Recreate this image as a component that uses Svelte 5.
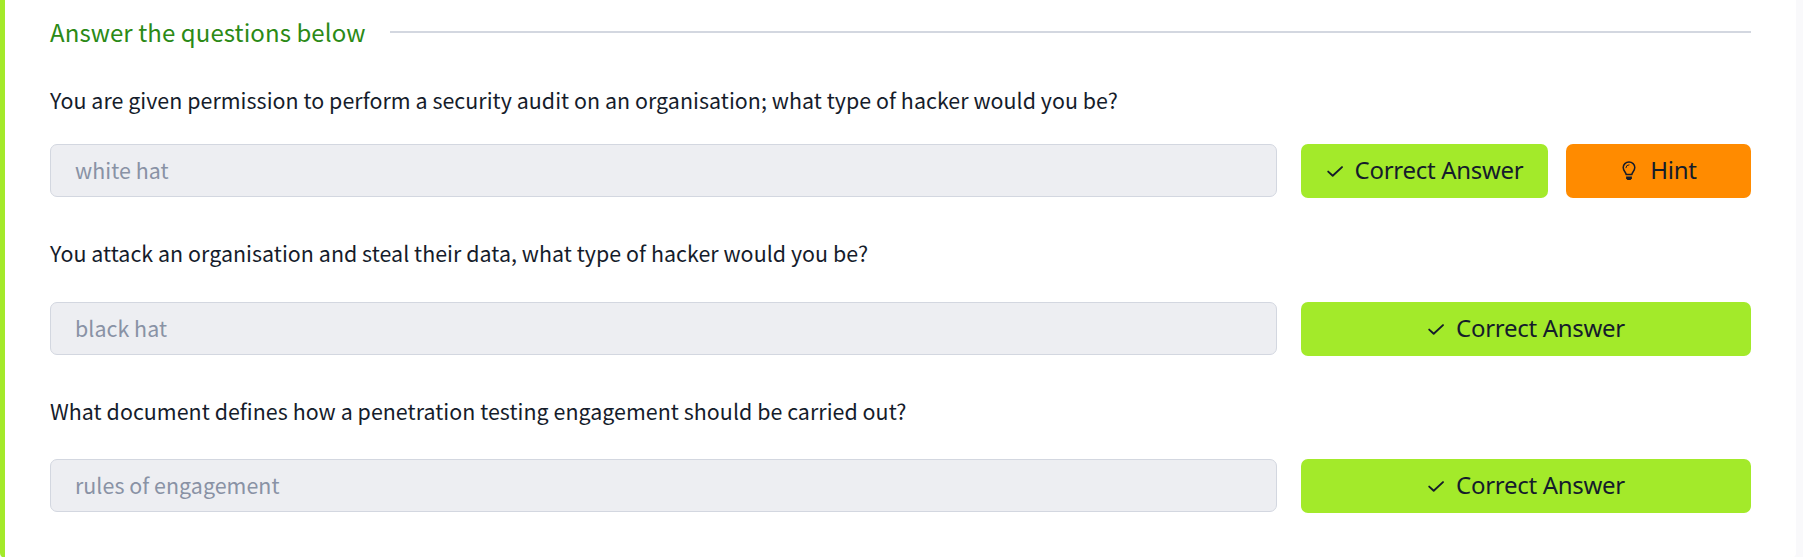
<script>
  const questions = [
    { text: 'You are given permission to perform a security audit on an organisation; what type of hacker would you be?', answer: 'white hat', hint: true },
    { text: 'You attack an organisation and steal their data, what type of hacker would you be?', answer: 'black hat', hint: false },
    { text: 'What document defines how a penetration testing engagement should be carried out?', answer: 'rules of engagement', hint: false }
  ];
</script>

<main class="page">
  <section class="card">
    <header class="heading">
      <h2>Answer the questions below</h2>
      <span class="rule"></span>
    </header>
    {#each questions as q}
      <div class="question">
        <p>{q.text}</p>
        <div class="row">
          <input type="text" placeholder={q.answer} disabled />
          <div class="actions">
            <button class="correct">
              <svg class="check" width="18" height="18" viewBox="0 0 18 18" aria-hidden="true">
                <path d="M2.2 9.6 6.7 13.8 16 5.1" fill="none" stroke="currentColor" stroke-width="1.9" stroke-linecap="round" stroke-linejoin="round" />
              </svg>
              <span>Correct Answer</span>
            </button>
            {#if q.hint}
              <button class="hint">
                <svg class="bulb" width="14" height="20" viewBox="0 0 14 20" aria-hidden="true">
                  <path d="M4.2 13.6C4 11.2 1.2 9.8 1.2 6.6A5.8 5.6 0 0 1 12.8 6.6C12.8 9.8 10 11.2 9.8 13.6Z" fill="none" stroke="currentColor" stroke-width="1.5" stroke-linejoin="round" />
                  <path d="M3.9 6.7A3.1 3.1 0 0 1 7 3.8" fill="none" stroke="currentColor" stroke-width="1" stroke-linecap="round" />
                  <path d="M4.1 15.4H9.9V17.3L8.6 19H5.4L4.1 17.3Z" fill="currentColor" />
                </svg>
                <span>Hint</span>
              </button>
            {/if}
          </div>
        </div>
      </div>
    {/each}
  </section>
</main>

<style>
  :global(body) { background: #f9f9fb; }
  .page {
    height: 557px;
    overflow: hidden;
    font-family: "Noto Sans CJK SC", "Noto Sans", sans-serif;
    color: #151c2b;
  }
  .card {
    box-sizing: border-box;
    width: 1796px;
    height: 558px;
    padding: 0 45px;
    background: #fff;
    border-left: 5px solid #a3ea2a;
    border-radius: 0 0 5px 5px;
  }
  .heading { display: flex; align-items: center; gap: 25px; height: 64px; }
  h2 { margin: 0; font-size: 24px; font-weight: 400; line-height: 32px; letter-spacing: 0.08px; color: #2b8a16; white-space: nowrap; width: 315px; }
  .rule { flex: 1; height: 2px; background: #d3d7e0; }
  .question { padding-top: 41px; }
  .heading + .question { padding-top: 22px; }
  p { margin: 0 0 34px; font-size: 21.4px; line-height: 28px; letter-spacing: 0.045px; white-space: nowrap; }
  .question:nth-child(2) p { margin-bottom: 30px; }
  .question:nth-child(3) p { margin-bottom: 35px; }
  .row { display: flex; gap: 24px; height: 54px; }
  input {
    box-sizing: border-box;
    width: 1227px;
    height: 53px;
    padding: 0 24px 2px;
    border: 1px solid #d3d7e0;
    border-radius: 7px;
    background: #edeef2;
    font: inherit;
    font-size: 21.4px;
    letter-spacing: 0.045px;
  }
  input::placeholder { color: #8992a5; opacity: 1; }
  .actions { flex: 1; display: flex; gap: 18px; }
  button {
    display: flex;
    align-items: center;
    justify-content: center;
    height: 54px;
    padding: 0;
    border: 0;
    border-radius: 7px;
    font-family: "Noto Sans", sans-serif;
    font-size: 24px;
    line-height: 30px;
    letter-spacing: -0.3px;
    color: #151c2b;
    white-space: nowrap;
  }
  button span { padding-bottom: 2px; }
  .correct { flex: 1; gap: 11px; background: #a3ea2a; }
  .hint { width: 185px; gap: 14px; padding-left: 2px; background: #ff8b00; }
</style>
